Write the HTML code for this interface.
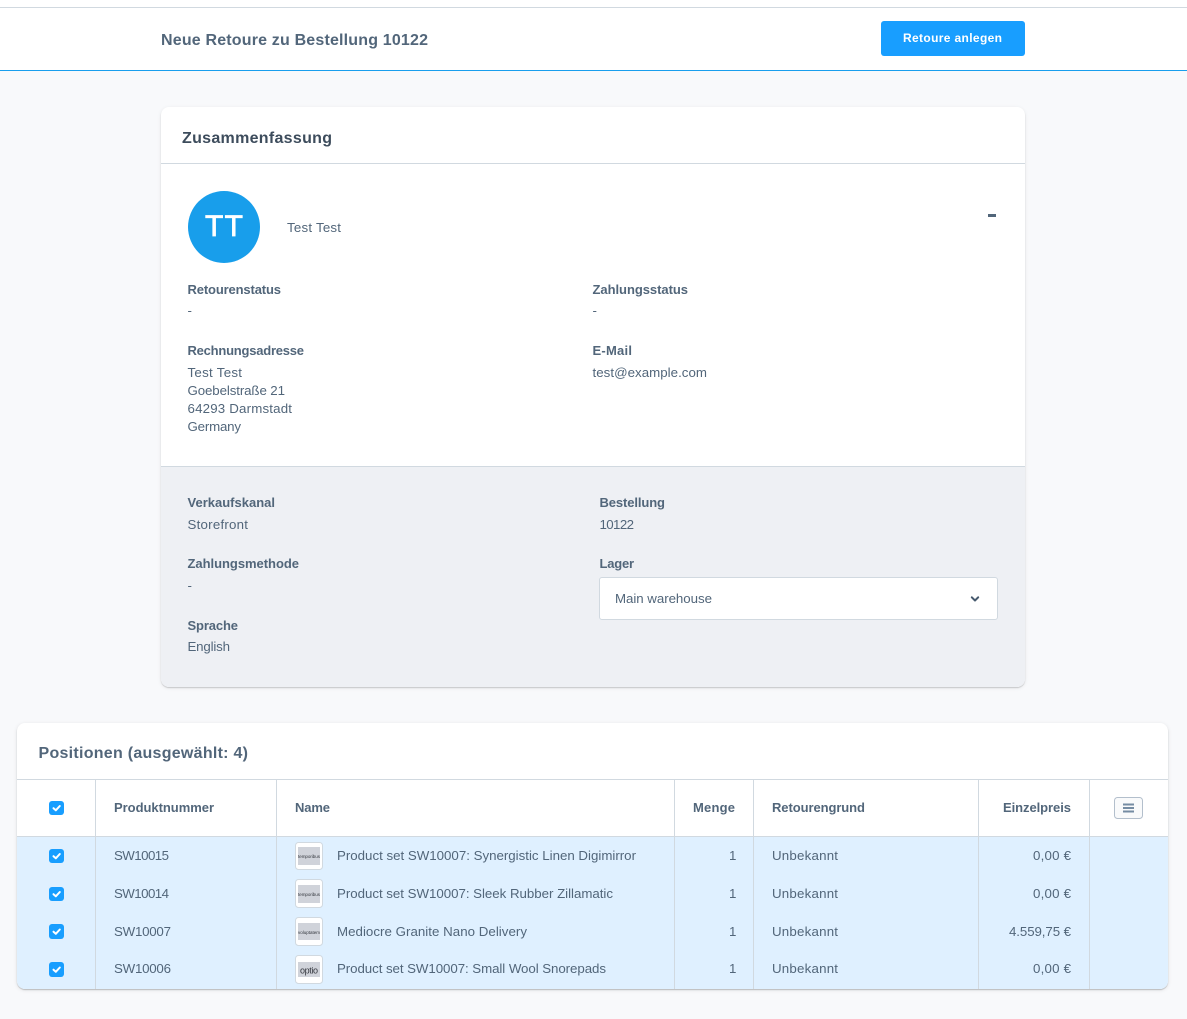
<!DOCTYPE html>
<html lang="de">
<head>
<meta charset="utf-8">
<title>Neue Retoure</title>
<style>
html,body{margin:0;padding:0;background:#f8f9fb;}
body{width:1187px;height:1019px;position:relative;overflow:hidden;font-family:"Liberation Sans",sans-serif;}
svg{position:absolute;left:0;top:0;display:block;}
.s{position:absolute;}
text{font-family:"Liberation Sans",sans-serif;font-size:13.3px;fill:#52667a;}
.l{font-weight:700;fill:#52667a;font-size:13px;}
</style>
</head>
<body>
<div class="s" style="left:0;top:0;width:1187px;height:70px;background:#fff;"></div>
<div class="s" style="left:0;top:7px;width:1187px;height:1px;background:#d1d9e0;"></div>
<div class="s" style="left:0;top:70px;width:1187px;height:1px;background:#189eed;"></div>
<div class="s" style="left:881px;top:21px;width:144px;height:35px;background:#189eff;border-radius:3px;"></div>

<div class="s" style="left:161px;top:107px;width:864px;height:580px;background:#fff;border-radius:8px;box-shadow:0 1px 1px rgba(0,0,0,.16),0 1px 4px rgba(0,0,0,.08);overflow:hidden;">
  <div class="s" style="left:0;top:56px;width:864px;height:1px;background:#d1d9e0;"></div>
  <div class="s" style="left:0;top:359px;width:864px;height:221px;background:#eef0f4;border-top:1px solid #d1d9e0;box-sizing:border-box;"></div>
</div>
<div class="s" style="left:188px;top:191px;width:72px;height:72px;border-radius:50%;background:#189eeb;"></div>
<div class="s" style="left:599px;top:577px;width:399px;height:43px;box-sizing:border-box;background:#fff;border:1px solid #d1d9e0;border-radius:3px;"></div>

<div class="s" style="left:17px;top:723px;width:1151px;height:266px;background:#fff;border-radius:8px;box-shadow:0 1px 1px rgba(0,0,0,.2),0 1px 4px rgba(0,0,0,.1);overflow:hidden;">
  <div class="s" style="left:0;top:56px;width:1151px;height:1px;background:#d1d9e0;"></div>
  <div class="s" style="left:0;top:113px;width:1151px;height:153px;background:#dff0ff;border-top:1px solid #d1d9e0;box-sizing:border-box;"></div>
  <div class="s" style="left:78px;top:56px;width:1px;height:210px;background:#d1d9e0;"></div>
  <div class="s" style="left:259px;top:56px;width:1px;height:210px;background:#d1d9e0;"></div>
  <div class="s" style="left:657px;top:56px;width:1px;height:210px;background:#d1d9e0;"></div>
  <div class="s" style="left:736px;top:56px;width:1px;height:210px;background:#d1d9e0;"></div>
  <div class="s" style="left:961px;top:56px;width:1px;height:210px;background:#d1d9e0;"></div>
  <div class="s" style="left:1072px;top:56px;width:1px;height:210px;background:#d1d9e0;"></div>
</div>

<svg width="1187" height="1019" viewBox="0 0 1187 1019" xmlns="http://www.w3.org/2000/svg">
  <text x="161" y="45" class="l" style="font-size:16px" textLength="267">Neue Retoure zu Bestellung 10122</text>
  <text x="903" y="42" style="font-size:12px;font-weight:700;fill:#fff" textLength="99">Retoure anlegen</text>
  <text x="182" y="143" class="l" style="font-size:16px;fill:#3d4c5c" textLength="150">Zusammenfassung</text>

  <text x="205" y="236" style="font-size:30px;fill:#fff;stroke:#fff;stroke-width:.7px" textLength="38">TT</text>
  <text x="287" y="232" textLength="54">Test Test</text>
  <rect x="988" y="214" width="8" height="3" fill="#52667a"/>

  <text x="187.500" y="294" class="l" textLength="93.500">Retourenstatus</text>
  <text x="592.500" y="294" class="l" textLength="95.500">Zahlungsstatus</text>
  <text x="187.500" y="315">-</text>
  <text x="592.500" y="315">-</text>
  <text x="187.500" y="355" class="l" textLength="116.500">Rechnungsadresse</text>
  <text x="592.500" y="355" class="l" textLength="39.500">E-Mail</text>
  <text x="187.500" y="377" textLength="54.500">Test Test</text>
  <text x="187.500" y="395" textLength="97.500">Goebelstraße 21</text>
  <text x="187.500" y="413" textLength="104.500">64293 Darmstadt</text>
  <text x="187.500" y="431" textLength="53.500">Germany</text>
  <text x="592.500" y="377" textLength="114.500">test@example.com</text>

  <text x="187.500" y="507" class="l" textLength="87.500">Verkaufskanal</text>
  <text x="187.500" y="529" textLength="60.500">Storefront</text>
  <text x="599.500" y="507" class="l" textLength="65.500">Bestellung</text>
  <text x="599.500" y="529" textLength="34.500">10122</text>
  <text x="187.500" y="568" class="l" textLength="111.500">Zahlungsmethode</text>
  <text x="187.500" y="590">-</text>
  <text x="599.500" y="568" class="l" textLength="34.500">Lager</text>
  <text x="615" y="603" textLength="97">Main warehouse</text>
  <path d="M971.800 597.300 L975 600.500 L978.200 597.300" fill="none" stroke="#465a6e" stroke-width="2" stroke-linecap="round" stroke-linejoin="round"/>
  <text x="187.500" y="630" class="l" textLength="50.500">Sprache</text>
  <text x="187.500" y="651" textLength="42.500">English</text>

  <text x="38.500" y="758" class="l" style="font-size:16px" textLength="209.500">Positionen (ausgewählt: 4)</text>

  <text x="114" y="812" class="l" textLength="100">Produktnummer</text>
  <text x="295" y="812" class="l" textLength="35">Name</text>
  <text x="693" y="812" class="l" textLength="42">Menge</text>
  <text x="772" y="812" class="l" textLength="93">Retourengrund</text>
  <text x="1003" y="812" class="l" textLength="68">Einzelpreis</text>

  <rect x="1114.500" y="797.500" width="28" height="21" rx="3" fill="#f9fafb" stroke="#b3bfcc"/>
  <path d="M1123 804.500H1134M1123 808H1134M1123 811.500H1134" stroke="#758ca3" stroke-width="2"/>

  <g fill="none" stroke="#fff" stroke-width="2" stroke-linecap="round" stroke-linejoin="round">
    <rect x="49" y="801" width="15" height="14" rx="3" fill="#189eff" stroke="none"/>
    <path d="M53.500 808.200L55.800 810.300L59.800 806"/>
    <rect x="49" y="849" width="15" height="14" rx="3" fill="#189eff" stroke="none"/>
    <path d="M53.500 856.200L55.800 858.300L59.800 854"/>
    <rect x="49" y="887" width="15" height="14" rx="3" fill="#189eff" stroke="none"/>
    <path d="M53.500 894.200L55.800 896.300L59.800 892"/>
    <rect x="49" y="924" width="15" height="15" rx="3" fill="#189eff" stroke="none"/>
    <path d="M53.500 931.700L55.800 933.800L59.800 929.500"/>
    <rect x="49" y="962" width="15" height="15" rx="3" fill="#189eff" stroke="none"/>
    <path d="M53.500 969.700L55.800 971.800L59.800 967.500"/>
  </g>

  <g>
    <rect x="295.500" y="842.500" width="27" height="27" rx="3" fill="#fff" stroke="#d1d9e0"/>
    <rect x="298" y="847" width="22" height="18" fill="#d0d3da"/>
    <text x="298" y="858" style="font-size:4.500px;fill:#33363d" textLength="22">temporibus</text>
    <rect x="295.500" y="879.500" width="27" height="28" rx="3" fill="#fff" stroke="#d1d9e0"/>
    <rect x="298" y="885" width="22" height="18" fill="#d0d3da"/>
    <text x="298" y="896" style="font-size:4.500px;fill:#33363d" textLength="22">temporibus</text>
    <rect x="295.500" y="917.500" width="27" height="28" rx="3" fill="#fff" stroke="#d1d9e0"/>
    <rect x="298" y="923" width="22" height="17" fill="#d0d3da"/>
    <text x="298" y="934" style="font-size:4.500px;fill:#33363d" textLength="22">voluptatem</text>
    <rect x="295.500" y="955.500" width="27" height="28" rx="3" fill="#fff" stroke="#d1d9e0"/>
    <rect x="298" y="962" width="22" height="15" fill="#d0d3da"/>
    <text x="300" y="973.500" style="font-size:9px;fill:#33363d" textLength="18">optio</text>
  </g>

  <text x="114" y="860" textLength="55">SW10015</text>
  <text x="337" y="860" textLength="299">Product set SW10007: Synergistic Linen Digimirror</text>
  <text x="729" y="860">1</text>
  <text x="772" y="860" textLength="66">Unbekannt</text>
  <text x="1033" y="860" textLength="38">0,00 €</text>

  <text x="114" y="898" textLength="55">SW10014</text>
  <text x="337" y="898" textLength="276">Product set SW10007: Sleek Rubber Zillamatic</text>
  <text x="729" y="898">1</text>
  <text x="772" y="898" textLength="66">Unbekannt</text>
  <text x="1033" y="898" textLength="38">0,00 €</text>

  <text x="114" y="936" textLength="57">SW10007</text>
  <text x="337" y="936" textLength="190">Mediocre Granite Nano Delivery</text>
  <text x="729" y="936">1</text>
  <text x="772" y="936" textLength="66">Unbekannt</text>
  <text x="1009" y="936" textLength="62">4.559,75 €</text>

  <text x="114" y="973" textLength="57">SW10006</text>
  <text x="337" y="973" textLength="269">Product set SW10007: Small Wool Snorepads</text>
  <text x="729" y="973">1</text>
  <text x="772" y="973" textLength="66">Unbekannt</text>
  <text x="1033" y="973" textLength="38">0,00 €</text>
</svg>
</body>
</html>
